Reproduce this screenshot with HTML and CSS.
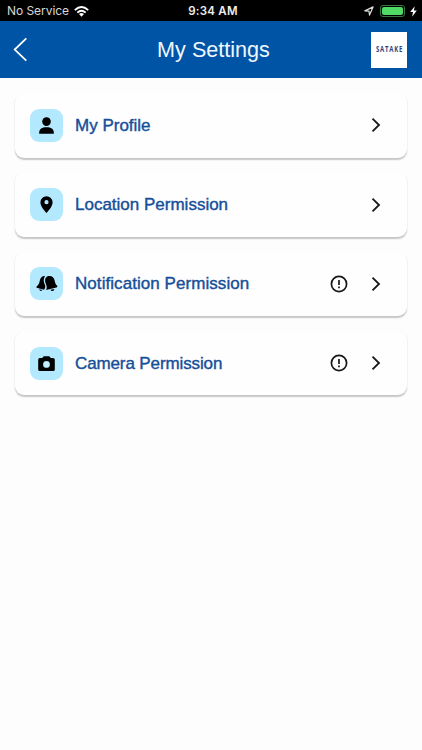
FILE: index.html
```html
<!DOCTYPE html>
<html lang="en">
<head>
<meta charset="utf-8">
<title>My Settings</title>
<link rel="stylesheet" href="styles.css">
</head>
<body>
<div class="status">
  <div class="status-left">
    <span class="carrier">No Service</span>
    <svg class="wifi" width="15" height="11" viewBox="0 0 15 11" fill="none" stroke="#fff" stroke-width="1.9"><path d="M.8 4.1Q7.5-2 14.2 4.1M3.3 6.6Q7.5 2.9 11.7 6.6"/><path d="M5 8.1Q7.5 6.1 10 8.1L7.5 10.7Z" fill="#fff" stroke="none"/></svg>
  </div>
  <span class="time">9:34 AM</span>
  <div class="status-right">
    <svg width="10" height="10" viewBox="0 0 10 10" fill="none" stroke="#ddd" stroke-width="1.2" stroke-linejoin="round"><path d="M.8 4.9 9.1.9 5.5 9.1 5 5.1Z"/></svg>
    <span class="battery"><span class="charge"></span></span>
    <svg class="bolt" width="7" height="11" viewBox="0 0 7 11" fill="#fff"><path d="M4.7.3.2 6.1H3L2.1 10.7 6.8 4.6H3.9Z"/></svg>
  </div>
</div>
<header class="bar">
  <svg class="back" width="16" height="25" viewBox="0 0 16 25" fill="none" stroke="#fff" stroke-width="1.8"><path d="M13.3 1.3 1.7 12.6 13.3 23.7"/></svg>
  <h1 class="title">My Settings</h1>
  <div class="logo"><span class="logo-text">SATAKE</span></div>
</header>
<main class="list">
  <div class="card">
    <span class="tile"><svg width="33" height="33" viewBox="0 0 33 33"><circle cx="16.5" cy="12.6" r="4.3"/><path d="M9.2 24.7V23.3C9.2 20.2 12 18.3 16.5 18.3S23.8 20.2 23.8 23.3V24.7Z"/></svg></span>
    <span class="label">My Profile</span>
    <svg class="chevron" width="10" height="16" viewBox="0 0 10 16"><path d="M1.5 1.7 8 8 1.5 14.3"/></svg>
  </div>
  <div class="card">
    <span class="tile"><svg width="33" height="33" viewBox="0 0 33 33"><path fill-rule="evenodd" d="M16.5 8.2A6.1 6.1 0 0 0 10.4 14.3C10.4 18.5 14.2 22.4 16.5 25 18.8 22.4 22.6 18.5 22.6 14.3A6.1 6.1 0 0 0 16.5 8.2ZM16.5 12.1A2.1 2.1 0 1 1 16.5 16.3 2.1 2.1 0 0 1 16.5 12.1Z"/></svg></span>
    <span class="label">Location Permission</span>
    <svg class="chevron" width="10" height="16" viewBox="0 0 10 16"><path d="M1.5 1.7 8 8 1.5 14.3"/></svg>
  </div>
  <div class="card">
    <span class="tile"><svg width="33" height="33" viewBox="0 0 33 33"><path d="M15 9.1C12.3 8.8 10.5 10.5 9.9 13.2 9.2 16.5 8.5 18 6.8 19.2 6 19.9 6.4 20.8 7.4 21.1L14.1 22.7C15.5 20.9 15.6 19.4 14.8 17.6 13.5 14.8 13.2 12.1 15 9.1Z"/><path d="M18.3 9.1C21.2 8.4 23.7 9.9 24.4 12.7 25.2 16.1 25.6 17.4 27 18.6 27.7 19.4 27.3 20.3 26.3 20.6L16.1 22.9C17.1 20.8 16.8 19.1 16 17.2 14.6 14 14.4 10.5 18.3 9.1Z"/><path d="M9.2 22.2 12.2 22.9Q11.6 24.3 10.4 23.8 9.4 23.5 9.2 22.2ZM20.4 22.8 24.4 21.9Q24.3 23.5 22.8 24 21.2 24.3 20.4 22.8Z"/></svg></span>
    <span class="label label-wide">Notification Permission</span>
    <svg class="alert" width="18" height="18" viewBox="0 0 18 18"><circle cx="9" cy="9" r="7.6"/><path d="M9 4.9V9.9M9 11.6V13.2"/></svg>
    <svg class="chevron" width="10" height="16" viewBox="0 0 10 16"><path d="M1.5 1.7 8 8 1.5 14.3"/></svg>
  </div>
  <div class="card">
    <span class="tile"><svg width="33" height="33" viewBox="0 0 33 33"><path fill-rule="evenodd" d="M9.8 11.1H12.2L13.7 9.2H19.3L20.8 11.1H23.2Q24.8 11.1 24.8 12.7V22.4Q24.8 24 23.2 24H9.8Q8.2 24 8.2 22.4V12.7Q8.2 11.1 9.8 11.1ZM16.5 14A3.4 3.4 0 1 0 16.5 20.8 3.4 3.4 0 0 0 16.5 14Z"/><circle cx="16.5" cy="17.4" r="2.5" fill="#c9efff"/></svg></span>
    <span class="label label-tight">Camera Permission</span>
    <svg class="alert" width="18" height="18" viewBox="0 0 18 18"><circle cx="9" cy="9" r="7.6"/><path d="M9 4.9V9.9M9 11.6V13.2"/></svg>
    <svg class="chevron" width="10" height="16" viewBox="0 0 10 16"><path d="M1.5 1.7 8 8 1.5 14.3"/></svg>
  </div>
</main>
</body>
</html>
```
FILE: styles.css
```css
* { box-sizing: border-box; }
body {
  margin: 0;
  min-height: 750px;
  background: #fdfdfd;
  font-family: "Liberation Sans", Arial, sans-serif;
}
.status {
  display: grid;
  grid-template-columns: 1fr auto 1fr;
  align-items: center;
  height: 21px;
  padding: 1px 5px 0 7px;
  background: #000;
  color: #fff;
  font-family: Inter, sans-serif;
  font-size: 12px;
  line-height: 20px;
}
.status-left, .status-right { display: flex; align-items: center; }
.carrier { color: #d8d8d8; letter-spacing: -0.05px; }
.wifi { margin-left: 5px; }
.time { margin-left: 2px; font-weight: 600; font-size: 11.5px; letter-spacing: 0.25px; color: #eee; }
.status-right { justify-content: flex-end; }
.battery {
  width: 25px;
  height: 12px;
  margin-left: 6px;
  padding: 1px;
  border: 1px solid #3b7546;
  border-radius: 3px;
}
.charge { display: block; height: 8px; border-radius: 2px; background: #50d964; }
.bolt { margin-left: 5px; }
.bar {
  display: grid;
  grid-template-columns: 50px 1fr 50px;
  align-items: center;
  height: 57px;
  padding: 0 15px 0 13px;
  background: #0054a6;
}
.title {
  margin: 0;
  padding-left: 7px;
  color: #f0f8ff;
  font-size: 21.6px;
  font-weight: 400;
  line-height: 26px;
  text-align: center;
}
.logo {
  display: flex;
  align-items: center;
  justify-content: center;
  justify-self: end;
  width: 36px;
  height: 36px;
  background: #fff;
}
.logo-text {
  color: #2c3f83;
  font: 700 9.5px/10px "Open Sans", sans-serif;
  letter-spacing: 1.3px;
  margin: 0 -1.3px 1px 0;
  transform: scaleX(0.63);
}
.list {
  display: flex;
  flex-direction: column;
  gap: 14.3px;
  padding: 15px 15px 0;
}
.card {
  display: flex;
  align-items: center;
  height: 64.6px;
  margin-bottom: 0.4px;
  padding: 0 26.5px 0 15px;
  border-radius: 9px;
  background: #fefefe;
  box-shadow: 0 1.5px 1.5px rgba(0, 0, 0, 0.22);
}
.tile {
  display: flex;
  width: 33px;
  height: 33px;
  border-radius: 9px;
  background: #b3e9ff;
}
.label {
  flex: 1;
  margin-left: 12px;
  padding-top: 1px;
  color: #164f99;
  font-size: 17px;
  line-height: 22px;
  -webkit-text-stroke: 0.4px #164f99;
}
.label-wide { letter-spacing: 0.06px; }
.label-tight { letter-spacing: -0.12px; }
.alert { margin-right: 23px; fill: none; stroke: #171717; stroke-width: 1.7; }
.chevron { fill: none; stroke: #171717; stroke-width: 1.8; }
```
